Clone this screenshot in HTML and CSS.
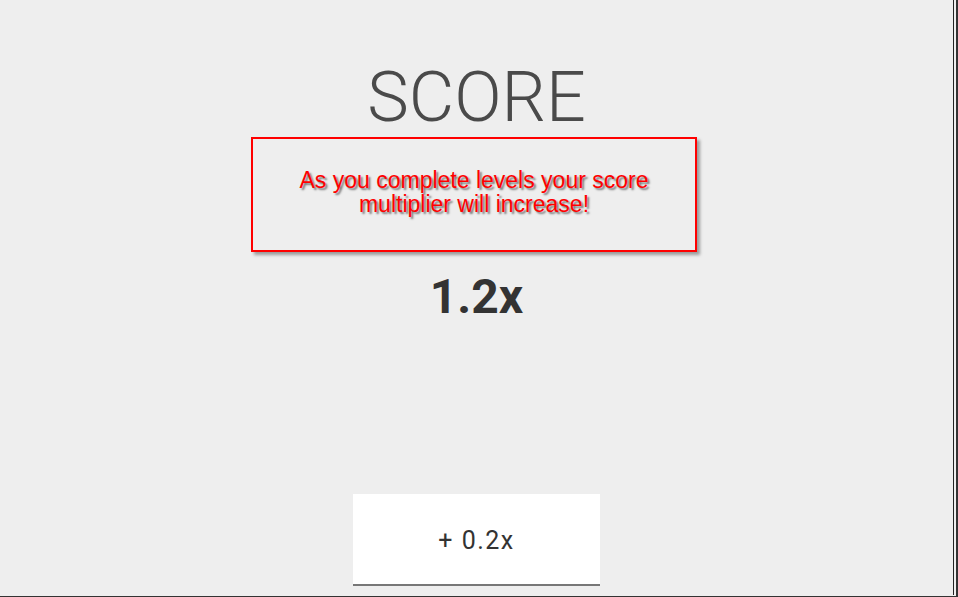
FILE: index.html
```html
<!DOCTYPE html>
<html>
<head>
<meta charset="utf-8">
<link rel="stylesheet" href="styles.css">
</head>
<body>
<div class="frame">
  <div class="panel">
    <h1 class="title">SCORE</h1>
    <div class="notice">
      <p class="notice-text">As you complete levels your score<br>multiplier will increase!</p>
    </div>
    <div class="multiplier">1.2x</div>
    <button class="bonus">+ 0.2x</button>
  </div>
</div>
</body>
</html>
```
FILE: styles.css
```css
html, body {
  margin: 0;
  padding: 0;
  background: #eeeeee;
}
.frame {
  width: 958px;
  height: 597px;
  box-sizing: border-box;
  border-right: 2px solid #333;
  border-bottom: 1px solid #333;
  background: #eeeeee;
  display: flex;
  overflow: hidden;
}
.panel {
  width: 954px;
  height: 595px;
  box-sizing: border-box;
  border-right: 1px solid #222;
  display: flex;
  flex-direction: column;
  align-items: center;
  font-family: Roboto, "Liberation Sans", sans-serif;
}
.title {
  margin: 62px 0 0 0;
  font-size: 70px;
  line-height: 70px;
  font-weight: 300;
  color: #4a4a4a;
}
.notice {
  margin-top: 5px;
  margin-right: 5px;
  width: 446px;
  height: 115px;
  box-sizing: border-box;
  border: 2px solid #ff0000;
  box-shadow: 3px 3px 3px rgba(0,0,0,0.35);
  display: flex;
  align-items: center;
  justify-content: center;
  padding-bottom: 5px;
}
.notice-text {
  margin: 0;
  font-family: "Liberation Sans", Arial, sans-serif;
  font-size: 23px;
  line-height: 24px;
  color: #ff0000;
  text-align: center;
  text-shadow: 2px 2px 2px rgba(0,0,0,0.5);
}
.multiplier {
  margin-top: 21px;
  font-size: 48px;
  line-height: 48px;
  font-weight: 700;
  color: #333;
}
.bonus {
  margin-top: 173px;
  width: 247px;
  height: 92px;
  box-sizing: border-box;
  background: #fff;
  border: none;
  border-bottom: 2px solid #777;
  font-family: Roboto, "Liberation Sans", sans-serif;
  font-size: 25px;
  letter-spacing: 1.5px;
  color: #333;
  padding: 3px 0 0 0;
}
```
